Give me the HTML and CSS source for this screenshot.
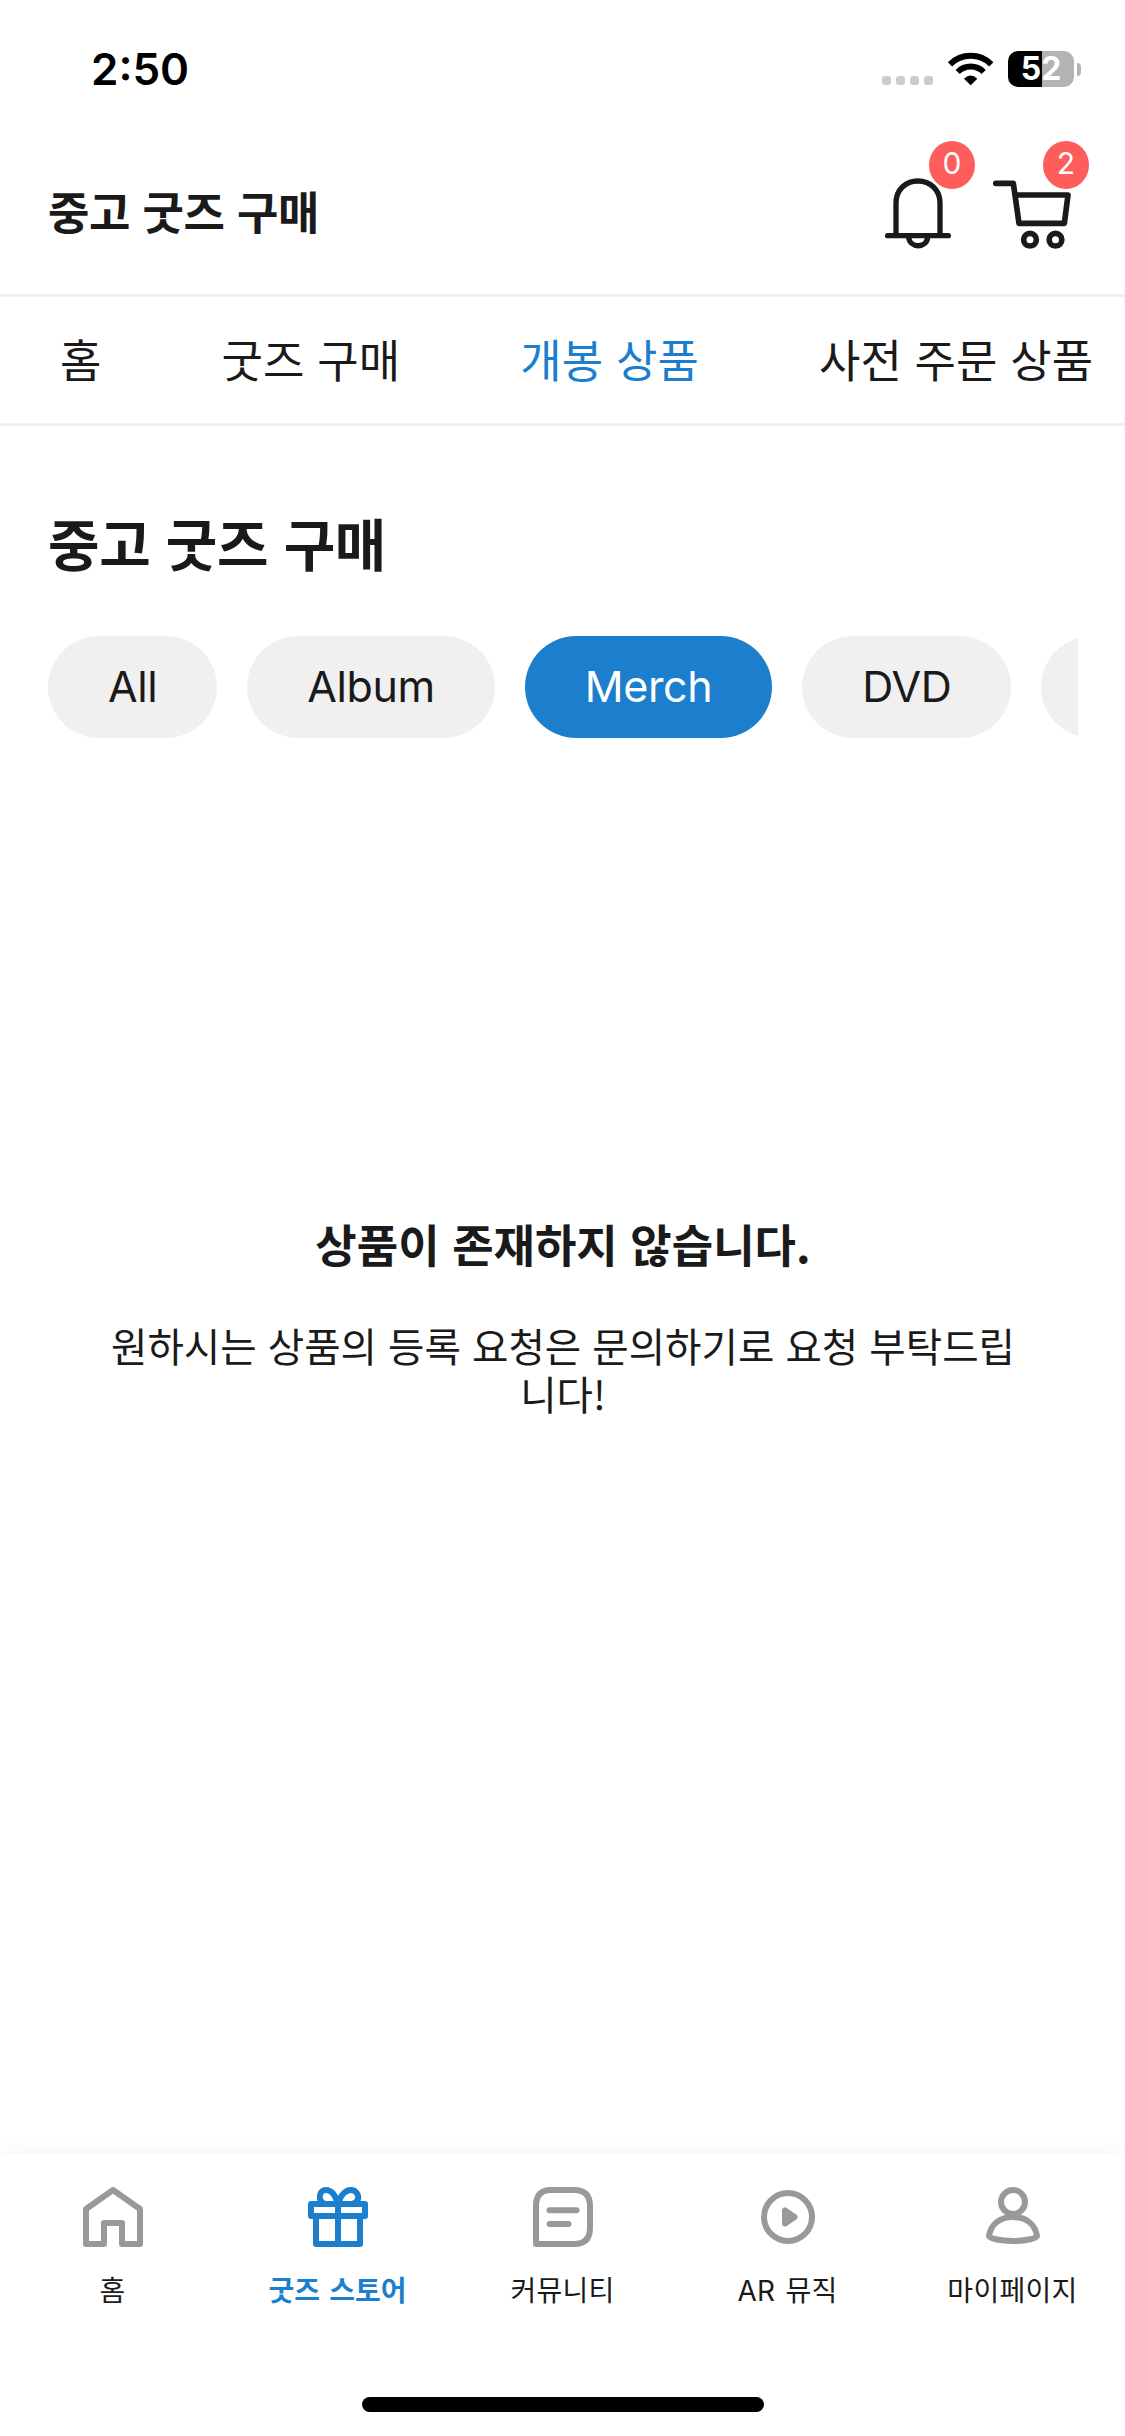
FILE: index.html
```html
<!DOCTYPE html>
<html lang="ko">
<head>
<meta charset="utf-8">
<title>중고 굿즈 구매</title>
<link rel="stylesheet" href="styles.css">
</head>
<body>
<div class="app">
  <div class="status">
    <span class="time">2:50</span>
    <div class="indicators">
      <div class="signal"><i></i><i></i><i></i><i></i></div>
      <svg class="wifi" viewBox="262 62 141 105" fill="none" stroke="#000" stroke-width="18">
        <path d="M271 102A88 88 0 0 1 395 102"/>
        <path d="M294 125A55 55 0 0 1 372 125"/>
        <path d="M333 165L313 145Q333 126 353 145Z" fill="#000" stroke="none"/>
      </svg>
      <div class="battery"><span class="level">52</span><i class="tip"></i></div>
    </div>
  </div>

  <header class="header">
    <h1 class="page-name">중고 굿즈 구매</h1>
    <div class="actions">
      <div class="action bell">
        <svg viewBox="76 443 198 213" fill="none" stroke="#1a1a1a" stroke-width="16" stroke-linecap="round">
          <path d="M109 614V518C109 478 138 452 174.500 452S241 478 241 518V614M84 616H266"/>
          <path d="M147 620C150 655 202 655 204 620"/>
        </svg>
        <span class="badge">0</span>
      </div>
      <div class="action cart">
        <svg viewBox="399 443 234 213" fill="none" stroke="#1a1a1a" stroke-width="17" stroke-linecap="round" stroke-linejoin="round">
          <path d="M407 459H460L477 579H613L624 494H467"/>
          <circle cx="510" cy="628" r="19"/>
          <circle cx="586.500" cy="628" r="19"/>
        </svg>
        <span class="badge">2</span>
      </div>
    </div>
  </header>

  <nav class="tabs">
    <a>홈</a>
    <a>굿즈 구매</a>
    <a class="active">개봉 상품</a>
    <a>사전 주문 상품</a>
  </nav>

  <main class="content">
    <h2 class="title">중고 굿즈 구매</h2>
    <div class="chips">
      <span class="chip">All</span>
      <span class="chip">Album</span>
      <span class="chip active">Merch</span>
      <span class="chip">DVD</span>
      <span class="chip more"></span>
    </div>
    <section class="empty">
      <h3>상품이 존재하지 않습니다.</h3>
      <p>원하시는 상품의 등록 요청은 문의하기로 요청 부탁드립니다!</p>
    </section>
  </main>

  <footer class="bottom">
    <nav class="bottom-nav">
      <a class="item">
        <svg viewBox="0 0 60 60"><path d="M3 57V22L30 3L57 22V57H39V36H21V57Z"/></svg>
        <span>홈</span>
      </a>
      <a class="item active">
        <svg viewBox="0 0 60 60"><path d="M3 17H57V29H3ZM8 29V57H52V29M30 17V57M29 16C28 8 23 3 18 3S11 8 12 12Q13 16 17 17M31 16C32 8 38 3 43 3S51 8 50 12Q49 16 44 17"/></svg>
        <span>굿즈 스토어</span>
      </a>
      <a class="item">
        <svg viewBox="0 0 60 60"><path d="M3 57V19Q3 3 18 3H41Q57 3 57 19V41Q57 57 41 57ZM16.500 23.300H43.500M16.500 37H35.500"/></svg>
        <span>커뮤니티</span>
      </a>
      <a class="item">
        <svg viewBox="0 0 60 60"><circle cx="30" cy="30" r="24"/><path class="solid" d="M27 23.500V36.500L36.500 30Z"/></svg>
        <span>AR 뮤직</span>
      </a>
      <a class="item">
        <svg viewBox="0 0 60 60"><circle cx="30" cy="15" r="12"/><path d="M6 49C8 37 17 30 30 30S52 37 54 49C54 51 44 54 30 54S6 51 6 49Z"/></svg>
        <span>마이페이지</span>
      </a>
    </nav>
    <div class="home-indicator"></div>
  </footer>
</div>
</body>
</html>
```
FILE: styles.css
```css
* { box-sizing: border-box; }

body {
  margin: 0;
  background: #fff;
  color: #1a1a1a;
  font-family: "Noto Sans CJK KR", sans-serif;
}

h1, h2, h3, p { margin: 0; }

.app {
  display: flex;
  flex-direction: column;
  width: 1125px;
  height: 2436px;
  overflow: hidden;
}

/* Status bar */
.status {
  display: flex;
  justify-content: space-between;
  align-items: center;
  height: 130px;
  padding: 8px 44px 0 91px;
  color: #000;
}
.time {
  font: 600 44px/50px Inter, sans-serif;
}
.indicators { display: flex; align-items: center; }
.signal { display: flex; gap: 5px; margin: 23px 14px 0 0; }
.signal i { width: 9px; height: 9px; border-radius: 3px; background: #ccc; }
.wifi { width: 47px; height: 35px; margin: 0 14px 2px 0; }
.battery { display: flex; align-items: center; gap: 3px; }
.level {
  width: 66px;
  height: 36px;
  border-radius: 10px;
  background: linear-gradient(to right, #000 34px, #b3b3b3 34px);
  color: #fff;
  font: 700 32px/36px Inter, sans-serif;
  text-align: center;
}
.tip { width: 4px; height: 13px; border-radius: 0 5px 5px 0; background: #b3b3b3; }

/* Header */
.header {
  display: flex;
  justify-content: space-between;
  align-items: center;
  height: 167px;
  padding: 0 54px 2px 48px;
  border-bottom: 3px solid #f0f0f0;
}
.page-name { font-size: 45px; line-height: 60px; font-weight: 700; letter-spacing: -0.300px; }
.actions { display: flex; gap: 42px; padding-top: 5px; }
.action { position: relative; height: 71px; }
.action svg { display: block; height: 71px; }
.bell svg { width: 66px; }
.cart svg { width: 78px; }
.badge {
  position: absolute;
  top: -37px;
  width: 46px;
  height: 48px;
  border-radius: 50%;
  background: #ff5c5c;
  color: #fff;
  font: 400 30px/45px Inter, sans-serif;
  text-align: center;
}
.bell .badge { right: -24px; }
.cart .badge { right: -18px; }

/* Category tabs */
.tabs {
  display: flex;
  align-items: center;
  gap: 120px;
  height: 129px;
  padding: 0 0 3px 60px;
  border-bottom: 3px solid #f0f0f0;
  font-size: 45px;
  line-height: 60px;
  letter-spacing: 0.100px;
  white-space: nowrap;
}
.tabs .active { color: #1b7fcd; }

/* Content */
.content {
  display: flex;
  flex-direction: column;
  flex: 1;
  padding: 76px 47px 0 48px;
}
.title { font-size: 56px; line-height: 80px; font-weight: 700; letter-spacing: -0.300px; }
.chips { display: flex; gap: 30px; margin-top: 54px; overflow: hidden; }
.chip {
  flex: none;
  height: 102px;
  padding: 0 60px;
  border-radius: 51px;
  background: #f0f0f0;
  font: 400 43px/101px Inter, sans-serif;
  letter-spacing: -0.400px;
}
.chip.active { background: #1b7fcd; color: #fff; }
.chip.more { width: 200px; }
.empty {
  margin-top: 476px;
  padding: 0 60px;
  text-align: center;
}
.empty h3 { font-size: 45px; line-height: 60px; font-weight: 700; }
.empty p {
  margin-top: 47px;
  font-size: 39.600px;
  line-height: 48px;
  word-break: break-all;
}

/* Bottom navigation */
.bottom {
  display: flex;
  flex-direction: column;
  align-items: center;
  height: 282px;
  padding-top: 33px;
  background: #fff;
  box-shadow: 0 0 24px rgba(0, 0, 0, 0.050);
}
.bottom-nav { display: grid; grid-template-columns: repeat(5, 225px); }
.item { display: flex; flex-direction: column; align-items: center; gap: 24px; }
.item svg {
  width: 60px;
  height: 60px;
  overflow: visible;
  fill: none;
  stroke: #999;
  stroke-width: 6;
  stroke-linecap: round;
  stroke-linejoin: round;
}
.item .solid { fill: #999; }
.item span {
  font: 400 28px/40px Inter, "Noto Sans CJK KR", sans-serif;
  letter-spacing: 0.300px;
  word-spacing: 2px;
}
.item.active svg { stroke: #1b7fcd; }
.item.active span { color: #1b7fcd; font-weight: 600; letter-spacing: 0; }
.home-indicator {
  width: 402px;
  height: 15px;
  margin-top: 86px;
  border-radius: 8px;
  background: #000;
}
```
